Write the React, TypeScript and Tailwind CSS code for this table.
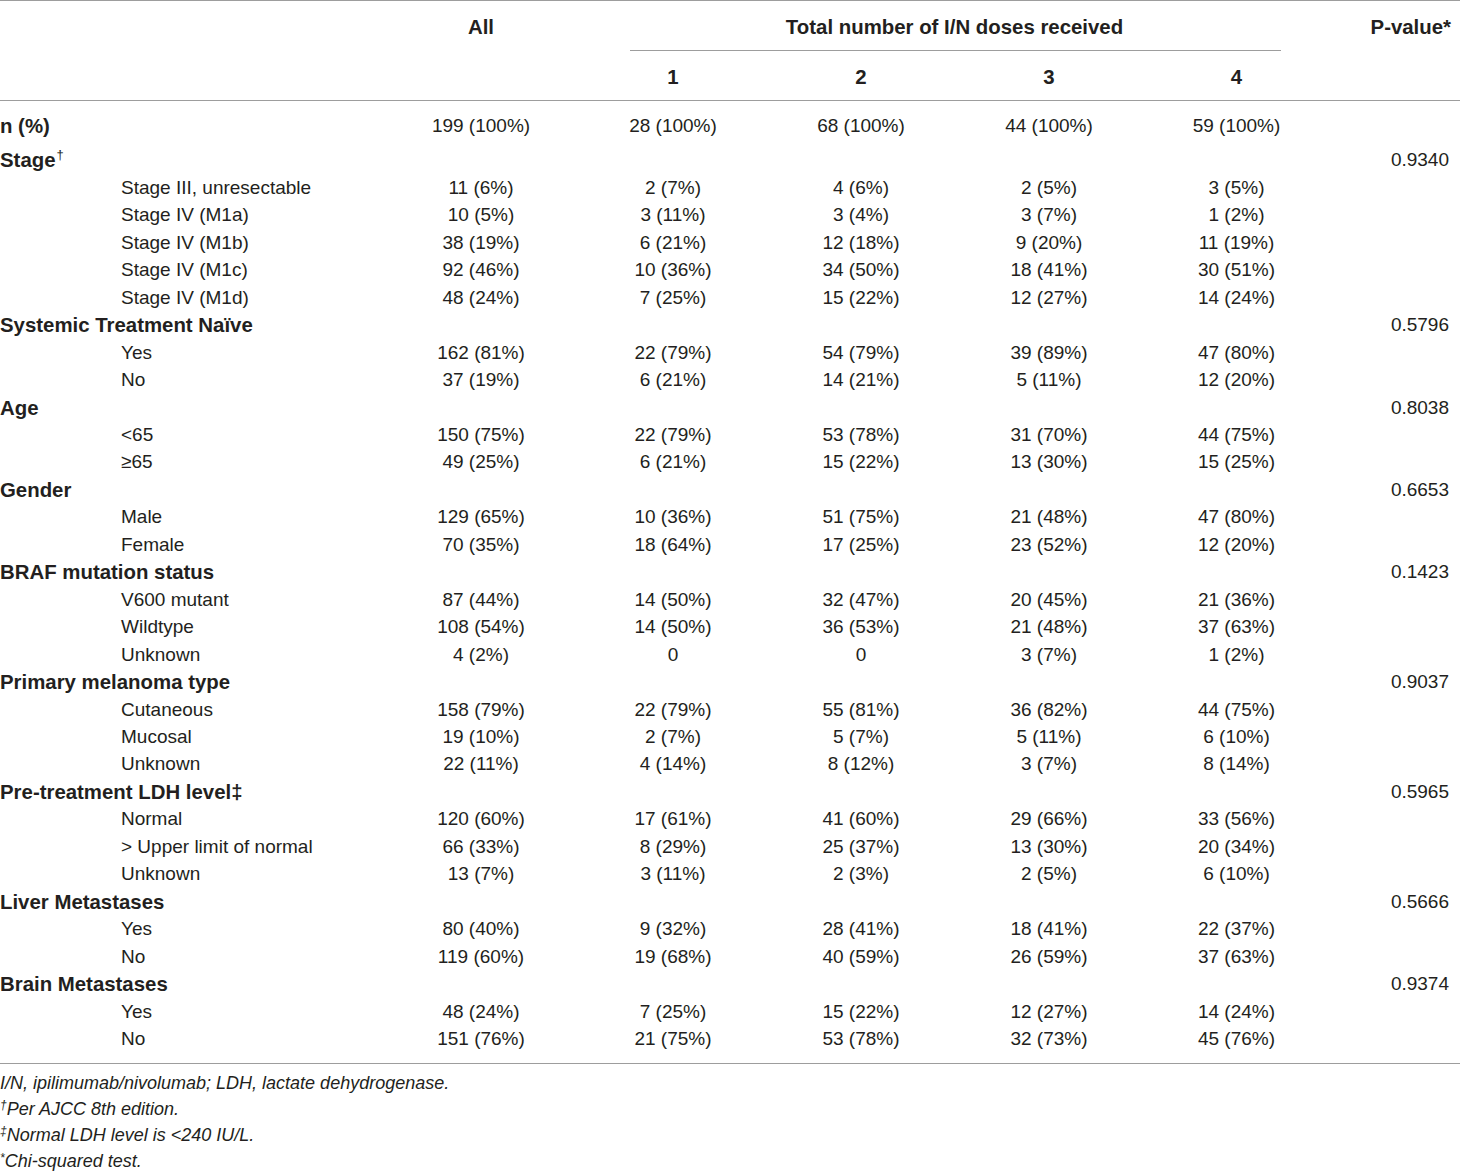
import React from "react";

type Row =
  | { kind: "group"; label: React.ReactNode; p?: string }
  | { kind: "item"; label: string; v: string[] };

const rows: Row[] = [
  { kind: "group", label: <>Stage<sup className="text-[13px] font-normal relative -top-[8px] ml-[1px]">†</sup></>, p: "0.9340" },
  { kind: "item", label: "Stage III, unresectable", v: ["11 (6%)", "2 (7%)", "4 (6%)", "2 (5%)", "3 (5%)"] },
  { kind: "item", label: "Stage IV (M1a)", v: ["10 (5%)", "3 (11%)", "3 (4%)", "3 (7%)", "1 (2%)"] },
  { kind: "item", label: "Stage IV (M1b)", v: ["38 (19%)", "6 (21%)", "12 (18%)", "9 (20%)", "11 (19%)"] },
  { kind: "item", label: "Stage IV (M1c)", v: ["92 (46%)", "10 (36%)", "34 (50%)", "18 (41%)", "30 (51%)"] },
  { kind: "item", label: "Stage IV (M1d)", v: ["48 (24%)", "7 (25%)", "15 (22%)", "12 (27%)", "14 (24%)"] },
  { kind: "group", label: "Systemic Treatment Naïve", p: "0.5796" },
  { kind: "item", label: "Yes", v: ["162 (81%)", "22 (79%)", "54 (79%)", "39 (89%)", "47 (80%)"] },
  { kind: "item", label: "No", v: ["37 (19%)", "6 (21%)", "14 (21%)", "5 (11%)", "12 (20%)"] },
  { kind: "group", label: "Age", p: "0.8038" },
  { kind: "item", label: "<65", v: ["150 (75%)", "22 (79%)", "53 (78%)", "31 (70%)", "44 (75%)"] },
  { kind: "item", label: "≥65", v: ["49 (25%)", "6 (21%)", "15 (22%)", "13 (30%)", "15 (25%)"] },
  { kind: "group", label: "Gender", p: "0.6653" },
  { kind: "item", label: "Male", v: ["129 (65%)", "10 (36%)", "51 (75%)", "21 (48%)", "47 (80%)"] },
  { kind: "item", label: "Female", v: ["70 (35%)", "18 (64%)", "17 (25%)", "23 (52%)", "12 (20%)"] },
  { kind: "group", label: "BRAF mutation status", p: "0.1423" },
  { kind: "item", label: "V600 mutant", v: ["87 (44%)", "14 (50%)", "32 (47%)", "20 (45%)", "21 (36%)"] },
  { kind: "item", label: "Wildtype", v: ["108 (54%)", "14 (50%)", "36 (53%)", "21 (48%)", "37 (63%)"] },
  { kind: "item", label: "Unknown", v: ["4 (2%)", "0", "0", "3 (7%)", "1 (2%)"] },
  { kind: "group", label: "Primary melanoma type", p: "0.9037" },
  { kind: "item", label: "Cutaneous", v: ["158 (79%)", "22 (79%)", "55 (81%)", "36 (82%)", "44 (75%)"] },
  { kind: "item", label: "Mucosal", v: ["19 (10%)", "2 (7%)", "5 (7%)", "5 (11%)", "6 (10%)"] },
  { kind: "item", label: "Unknown", v: ["22 (11%)", "4 (14%)", "8 (12%)", "3 (7%)", "8 (14%)"] },
  { kind: "group", label: "Pre-treatment LDH level‡", p: "0.5965" },
  { kind: "item", label: "Normal", v: ["120 (60%)", "17 (61%)", "41 (60%)", "29 (66%)", "33 (56%)"] },
  { kind: "item", label: "> Upper limit of normal", v: ["66 (33%)", "8 (29%)", "25 (37%)", "13 (30%)", "20 (34%)"] },
  { kind: "item", label: "Unknown", v: ["13 (7%)", "3 (11%)", "2 (3%)", "2 (5%)", "6 (10%)"] },
  { kind: "group", label: "Liver Metastases", p: "0.5666" },
  { kind: "item", label: "Yes", v: ["80 (40%)", "9 (32%)", "28 (41%)", "18 (41%)", "22 (37%)"] },
  { kind: "item", label: "No", v: ["119 (60%)", "19 (68%)", "40 (59%)", "26 (59%)", "37 (63%)"] },
  { kind: "group", label: "Brain Metastases", p: "0.9374" },
  { kind: "item", label: "Yes", v: ["48 (24%)", "7 (25%)", "15 (22%)", "12 (27%)", "14 (24%)"] },
  { kind: "item", label: "No", v: ["151 (76%)", "21 (75%)", "53 (78%)", "32 (73%)", "45 (76%)"] },
];

const cols = "grid grid-cols-[383px_196px_188px_188px_188px_187px_130px]";

export default function App() {
  return (
    <div
      className="w-[1460px] h-[1172px] bg-white text-[#231f20] overflow-hidden"
      style={{ fontFamily: '"Liberation Sans", Arial, Helvetica, sans-serif' }}
    >
      {/* Header */}
      <div className="border-t border-[#9d9d9d]">
        <div className={`${cols} h-[49px] items-center pt-[3px] text-[20.4px] font-bold`}>
          <div />
          <div className="text-center">All</div>
          <div className="col-span-4 text-center">Total number of I/N doses received</div>
          <div className="text-right pr-[9px] whitespace-nowrap">P-value*</div>
        </div>
        <div className={cols}>
          <div className="col-start-3 col-span-4 ml-[51px] mr-[49px] border-t border-[#9d9d9d]" />
        </div>
        <div className={`${cols} h-[49px] items-center pt-[3px] text-[20.4px] font-bold`}>
          <div />
          <div />
          <div className="text-center">1</div>
          <div className="text-center">2</div>
          <div className="text-center">3</div>
          <div className="text-center">4</div>
          <div />
        </div>
      </div>

      {/* Body */}
      <div className="border-t border-[#9d9d9d] pt-[11px] pb-[11px] text-[19px] leading-[27.45px]">
        <div className={`${cols} mb-[7px]`}>
          <div className="font-bold text-[20.4px] relative top-[1px]">n (%)</div>
          <div className="text-center">199 (100%)</div>
          <div className="text-center">28 (100%)</div>
          <div className="text-center">68 (100%)</div>
          <div className="text-center">44 (100%)</div>
          <div className="text-center">59 (100%)</div>
          <div />
        </div>
        {rows.map((r, i) =>
          r.kind === "group" ? (
            <div key={i} className={cols}>
              <div className="col-span-6 font-bold text-[20.4px] whitespace-nowrap relative top-[1px]">{r.label}</div>
              <div className="text-right pr-[11px]">{r.p}</div>
            </div>
          ) : (
            <div key={i} className={cols}>
              <div className="pl-[121px] whitespace-nowrap">{r.label}</div>
              {r.v.map((v, j) => (
                <div key={j} className="text-center whitespace-nowrap">
                  {v}
                </div>
              ))}
              <div />
            </div>
          )
        )}
      </div>

      {/* Footnotes */}
      <div className="border-t border-[#9d9d9d] pt-[6px] text-[18px] leading-[26px] italic">
        <div>I/N, ipilimumab/nivolumab; LDH, lactate dehydrogenase.</div>
        <div>
          <sup className="text-[12px] relative -top-[6px]">†</sup>Per AJCC 8th edition.
        </div>
        <div>
          <sup className="text-[12px] relative -top-[6px]">‡</sup>Normal LDH level is &lt;240 IU/L.
        </div>
        <div>
          <sup className="text-[12px] relative -top-[5px]">*</sup>Chi-squared test.
        </div>
      </div>
    </div>
  );
}
